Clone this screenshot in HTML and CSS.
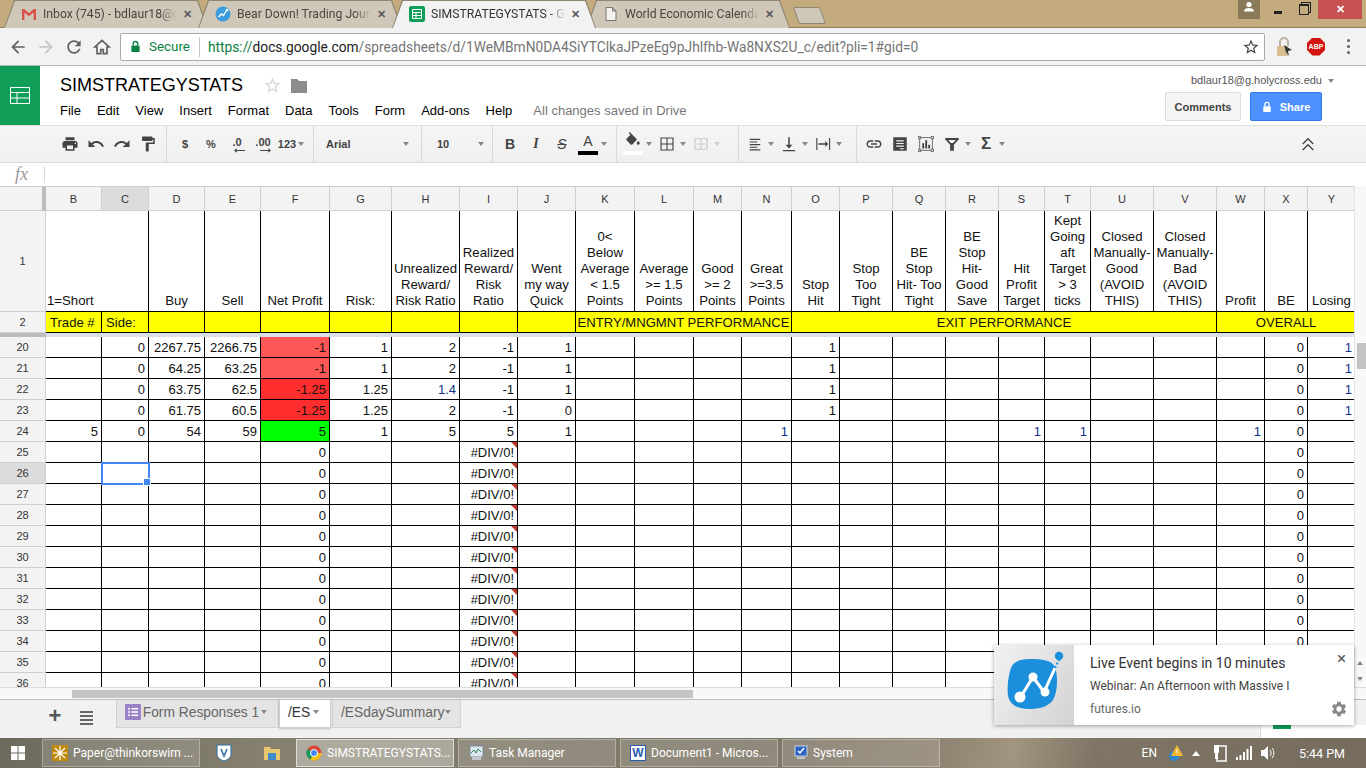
FILE: index.html
```html
<!DOCTYPE html>
<html lang="en">
<head>
  <meta charset="UTF-8">
  <title>SIMSTRATEGYSTATS - Google Sheets</title>
  <link rel="stylesheet" href="styles.css">
</head>
<body>

  <div class="tabstrip">
    <div class="tab">
      <svg class="tab-icon" viewBox="0 0 16 16"><path d="M1 3h2.2L8 7l4.8-4H15v11h-2.4V6.6L8 10.200 3.400 6.600V14H1z" fill="#d9534a"/></svg>
      <span class="tab-title">Inbox (745) - bdlaur18@g</span>
      <span class="tab-close">&#10005;</span>
    </div>
    <div class="tab">
      <svg class="tab-icon" viewBox="0 0 16 16"><circle cx="8" cy="8" r="7.500" fill="#3b9bdc"/><path d="M3.500 11l3-3 2 1.500 3-5" fill="none" stroke="#fff" stroke-width="1.400"/><circle cx="12" cy="4" r="1.300" fill="#fff"/></svg>
      <span class="tab-title">Bear Down! Trading Journ</span>
      <span class="tab-close">&#10005;</span>
    </div>
    <div class="tab active">
      <svg class="tab-icon" viewBox="0 0 16 16"><rect width="16" height="16" rx="2" fill="#0f9d58"/><path d="M3.500 3.500h9v9h-9zM3.500 6.500h9M3.500 9.500h9M7 6.500v6" fill="none" stroke="#fff"/></svg>
      <span class="tab-title">SIMSTRATEGYSTATS - Go</span>
      <span class="tab-close">&#10005;</span>
    </div>
    <div class="tab">
      <svg class="tab-icon" viewBox="0 0 16 16"><path d="M3 1.500h6.500l3.500 3.500v9.500H3zM9.500 1.500V5H13" fill="#f4f2ee" stroke="#777"/></svg>
      <span class="tab-title">World Economic Calenda</span>
      <span class="tab-close">&#10005;</span>
    </div>
    <div class="newtab"></div>
    <div class="win-controls">
      <div class="win-user"><svg viewBox="0 0 14 14" width="14" height="14"><circle cx="7" cy="4.500" r="2.600" fill="#fff"/><path d="M2 11.500c0-2.500 2.500-3.500 5-3.500s5 1 5 3.500z" fill="#fff"/></svg></div>
      <div class="win-min"></div>
      <div class="win-max"></div>
      <div class="win-close">&#10005;</div>
    </div>
  </div>

  <div class="chrome-bar">
    <svg class="nav-icon" viewBox="0 0 24 24"><path d="M20 11H7.830l5.590-5.590L12 4l-8 8 8 8 1.410-1.410L7.830 13H20v-2z" fill="#5f5f5f"/></svg>
    <svg class="nav-icon" viewBox="0 0 24 24"><path d="M12 4l-1.410 1.410L16.170 11H4v2h12.170l-5.580 5.590L12 20l8-8z" fill="#c4c4c4"/></svg>
    <svg class="nav-icon" viewBox="0 0 24 24"><path d="M17.650 6.350C16.200 4.900 14.210 4 12 4c-4.420 0-7.990 3.580-7.990 8s3.570 8 7.990 8c3.730 0 6.840-2.550 7.730-6h-2.080c-.82 2.330-3.040 4-5.650 4-3.310 0-6-2.690-6-6s2.690-6 6-6c1.660 0 3.140.69 4.220 1.780L13 11h7V4l-2.350 2.350z" fill="#5f5f5f"/></svg>
    <svg class="nav-icon" viewBox="0 0 24 24"><path d="M12 4L3.500 12H6v8h4.500v-5h3v5H18v-8h2.500z" fill="none" stroke="#5f5f5f" stroke-width="2"/></svg>
    <div class="omnibox">
      <svg class="secure-lock" viewBox="0 0 12 14"><path d="M3.500 6V4a2.500 2.500 0 0 1 5 0v2" fill="none" stroke="#0b8043" stroke-width="1.500"/><rect x="1.500" y="6" width="9" height="7" rx="1" fill="#0b8043"/></svg>
      <span class="secure">Secure</span>
      <span class="omni-sep"></span>
      <span class="url"><span class="url-https">https://</span><span class="url-host">docs.google.com</span>/spreadsheets/d/1WeMBmN0DA4SiYTClkaJPzeEg9pJhlfhb-Wa8NXS2U_c/edit?pli=1#gid=0</span>
      <svg class="omni-star" viewBox="0 0 24 24"><path d="M22 9.240l-7.190-.62L12 2 9.190 8.630 2 9.240l5.460 4.730L5.820 21 12 17.270 18.180 21l-1.630-7.030L22 9.240zM12 15.400l-3.760 2.270 1-4.280-3.320-2.880 4.380-.38L12 6.100l1.710 4.040 4.380.38-3.320 2.880 1 4.280L12 15.400z" fill="#444"/></svg>
    </div>
    <svg class="ext-lock" viewBox="0 0 18 22"><path d="M5 10V6a4 4 0 0 1 8 0v4" fill="none" stroke="#b9b2a5" stroke-width="2"/><rect x="2" y="10" width="11" height="10" rx="1" fill="#d8bf90"/><path d="M9 9l8 5-4 1 1 5-3-4z" fill="#333"/></svg>
    <div class="abp">ABP</div>
    <div class="kebab"><i></i><i></i><i></i></div>
  </div>

  <div class="doc-header">
    <div class="sheets-logo">
      <svg viewBox="0 0 20 17" width="20" height="17"><path d="M.5.5h19v16H.5zM.5 5.500h19M.5 11h19M7 5.500v11" fill="none" stroke="#fff"/></svg>
    </div>
    <div class="doc-main">
      <div class="doc-title-row">
        <span class="doc-title">SIMSTRATEGYSTATS</span>
        <svg class="doc-star" viewBox="0 0 24 24"><path d="M22 9.240l-7.190-.62L12 2 9.190 8.630 2 9.240l5.460 4.730L5.820 21 12 17.270 18.180 21l-1.630-7.030L22 9.240zM12 15.400l-3.760 2.270 1-4.280-3.320-2.880 4.380-.38L12 6.100l1.710 4.040 4.380.38-3.320 2.880 1 4.280L12 15.400z" fill="#d6d6d6"/></svg>
        <svg class="doc-folder" viewBox="0 0 16 14"><path d="M0 0h6l2 2h8v12H0z" fill="#8c8c8c"/></svg>
      </div>
      <div class="menu">
        <span>File</span><span>Edit</span><span>View</span><span>Insert</span><span>Format</span><span>Data</span><span>Tools</span><span>Form</span><span>Add-ons</span><span>Help</span>
        <span class="saved">All changes saved in Drive</span>
      </div>
    </div>
    <div class="doc-right">
      <div class="account">bdlaur18@g.holycross.edu<i class="caret account-caret"></i></div>
      <div class="doc-buttons">
        <div class="btn-comments">Comments</div>
        <div class="btn-share">
          <svg viewBox="0 0 12 14" width="10" height="12"><path d="M3.500 6V4a2.500 2.500 0 0 1 5 0v2" fill="none" stroke="#fff" stroke-width="1.500"/><rect x="1.500" y="6" width="9" height="7" rx="1" fill="#fff"/></svg>
          Share
        </div>
      </div>
    </div>
  </div>

  <div class="toolbar">
    <div class="tb-group g-edit">
      <div class="tb"><svg viewBox="0 0 24 24"><path d="M19 8H5c-1.660 0-3 1.340-3 3v6h4v4h12v-4h4v-6c0-1.660-1.340-3-3-3zm-3 11H8v-5h8v5zm3-7c-.55 0-1-.45-1-1s.45-1 1-1 1 .45 1 1-.45 1-1 1zm-1-9H6v4h12V3z"/></svg></div>
      <div class="tb"><svg viewBox="0 0 24 24"><path d="M12.500 8c-2.650 0-5.050.99-6.900 2.600L2 7v9h9l-3.620-3.620c1.390-1.160 3.160-1.880 5.120-1.880 3.540 0 6.550 2.310 7.600 5.500l2.370-.78C21.080 11.030 17.150 8 12.500 8z"/></svg></div>
      <div class="tb"><svg viewBox="0 0 24 24"><path d="M18.400 10.600C16.550 8.990 14.150 8 11.500 8c-4.650 0-8.580 3.030-9.960 7.220L3.900 16c1.050-3.190 4.050-5.500 7.600-5.500 1.950 0 3.730.72 5.120 1.880L13 16h9V7l-3.600 3.600z"/></svg></div>
      <div class="tb"><svg viewBox="0 0 24 24"><path d="M18 4V3c0-.55-.45-1-1-1H5c-.55 0-1 .45-1 1v4c0 .55.45 1 1 1h12c.55 0 1-.45 1-1V6h1v4H9v11c0 .55.45 1 1 1h2c.55 0 1-.45 1-1v-9h8V4h-3z"/></svg></div>
    </div>
    <div class="tb-group g-number">
      <div class="tb tb-text">$</div>
      <div class="tb tb-text">%</div>
      <div class="tb tb-text tb-dec">.0<svg viewBox="0 0 12 5" class="dec-arrow"><path d="M0 2.500L3 0v2h9v1H3v2z"/></svg></div>
      <div class="tb tb-text tb-dec">.00<svg viewBox="0 0 12 5" class="dec-arrow"><path d="M12 2.500L9 0v2H0v1h9v2z"/></svg></div>
      <div class="tb tb-text tb-fmt">123</div><i class="caret"></i>
    </div>
    <div class="tb-group g-font"><span>Arial</span><i class="caret"></i></div>
    <div class="tb-group g-size"><span>10</span><i class="caret"></i></div>
    <div class="tb-group g-style">
      <div class="tb tb-b">B</div>
      <div class="tb tb-i">I</div>
      <div class="tb tb-s">S</div>
      <div class="tb tb-a">A<span class="color-bar black"></span></div><i class="caret"></i>
    </div>
    <div class="tb-group g-cell">
      <div class="tb tb-fill"><svg viewBox="0 0 24 24"><path d="M16.560 8.940L7.620 0 6.210 1.410l2.380 2.380-5.150 5.150c-.59.59-.59 1.540 0 2.120l5.500 5.500c.29.29.68.44 1.060.44s.77-.15 1.060-.44l5.500-5.500c.59-.58.59-1.530 0-2.120zM19 11.500s-2 2.170-2 3.500c0 1.100.9 2 2 2s2-.9 2-2c0-1.330-2-3.500-2-3.500z"/></svg><span class="color-bar white"></span></div><i class="caret"></i>
      <div class="tb"><svg viewBox="0 0 24 24"><path d="M4 4h16v16H4zM4 12h16M12 4v16" fill="none" stroke="#444" stroke-width="1.500"/></svg></div><i class="caret"></i>
      <div class="tb"><svg viewBox="0 0 24 24"><path d="M4 5h16v14H4zM12 5v14M6 12h4M14 12h4" fill="none" stroke="#c8c8c8" stroke-width="1.500"/></svg></div><i class="caret faint"></i>
    </div>
    <div class="tb-group g-align">
      <div class="tb"><svg viewBox="0 0 24 24"><path d="M5 5h14v1.500H5zM5 8.500h10V10H5zM5 12h14v1.500H5zM5 15.500h10V17H5zM5 19h14v1.500H5z"/></svg></div><i class="caret"></i>
      <div class="tb"><svg viewBox="0 0 24 24"><path d="M4 20h16v1.500H4zM11 3h2v10h3.500L12 18l-4.500-5H11z"/></svg></div><i class="caret"></i>
      <div class="tb"><svg viewBox="0 0 24 24"><path d="M3 4h1.500v16H3zM20 4h1.500v16H20zM6 11h9V8l4 4-4 4v-3H6z"/></svg></div><i class="caret"></i>
    </div>
    <div class="tb-group g-insert">
      <div class="tb"><svg viewBox="0 0 24 24"><path d="M3.900 12c0-1.710 1.390-3.100 3.100-3.100h4V7H7c-2.760 0-5 2.240-5 5s2.240 5 5 5h4v-1.900H7c-1.710 0-3.100-1.390-3.100-3.100zM8 13h8v-2H8v2zm9-6h-4v1.900h4c1.710 0 3.100 1.390 3.100 3.100s-1.390 3.100-3.100 3.100h-4V17h4c2.760 0 5-2.240 5-5s-2.240-5-5-5z"/></svg></div>
      <div class="tb"><svg viewBox="0 0 24 24"><path d="M3 3h18v18H3z"/><path d="M7 7h10v1.500H7zM7 10.500h10V12H7zM7 14h10v1.500H7zM12 17.500h5V19h-5z" fill="#f1f1f1"/></svg></div>
      <div class="tb"><svg viewBox="0 0 24 24"><path d="M3.500 3.500h17v17h-17z" fill="none" stroke="#444"/><path d="M7 11h2.500v7H7zM11 7h2.500v11H11zM15 13h2.500v5H15z"/><path d="M2 2h3v3H2zM19 2h3v3h-3zM2 19h3v3H2zM19 19h3v3h-3z" fill="#f1f1f1" stroke="#444"/></svg></div>
      <div class="tb"><svg viewBox="0 0 24 24"><path d="M3 4h18v2l-6.500 7v8h-5v-8L3 6zM7 6.500l3.500 4h3l3.500-4z" fill-rule="evenodd"/></svg></div><i class="caret"></i>
      <div class="tb tb-sigma">&Sigma;</div><i class="caret"></i>
    </div>
    <div class="tb tb-collapse"><svg viewBox="0 0 24 24"><path d="M5 12l7-7 7 7M5 20l7-7 7 7" fill="none" stroke="#444" stroke-width="1.800"/></svg></div>
  </div>

  <div class="formula-bar">
    <div class="fx">fx</div>
    <div class="formula-input"></div>
  </div>

  <div class="grid-wrap">
    <div class="grid">
      <table class="sheet">
        <colgroup>
          <col class="c46"><col class="c56"><col class="c47"><col class="c56"><col class="c56"><col class="c69"><col class="c62"><col class="c68"><col class="c58"><col class="c58"><col class="c59"><col class="c59"><col class="c48"><col class="c50"><col class="c48"><col class="c53"><col class="c53"><col class="c53"><col class="c46"><col class="c46"><col class="c63"><col class="c63"><col class="c48"><col class="c43"><col class="c48">
        </colgroup>
        <tr class="col-head">
          <th class="corner"></th><th>B</th><th class="on">C</th><th>D</th><th>E</th><th>F</th><th>G</th><th>H</th><th>I</th><th>J</th><th>K</th><th>L</th><th>M</th><th>N</th><th>O</th><th>P</th><th>Q</th><th>R</th><th>S</th><th>T</th><th>U</th><th>V</th><th>W</th><th>X</th><th>Y</th>
        </tr>
        <tr class="r1">
          <th>1</th><td colspan="2" class="left">1=Short</td><td>Buy</td><td>Sell</td><td>Net Profit</td><td>Risk:</td><td>Unrealized<br>Reward/<br>Risk Ratio</td><td>Realized<br>Reward/<br>Risk<br>Ratio</td><td>Went<br>my way<br>Quick</td><td>0&lt;<br>Below<br>Average<br>&lt; 1.5<br>Points</td><td>Average<br>&gt;= 1.5<br>Points</td><td>Good<br>&gt;= 2<br>Points</td><td>Great<br>&gt;=3.5<br>Points</td><td>Stop<br>Hit</td><td>Stop<br>Too<br>Tight</td><td>BE<br>Stop<br>Hit- Too<br>Tight</td><td>BE<br>Stop<br>Hit-<br>Good<br>Save</td><td>Hit<br>Profit<br>Target</td><td>Kept<br>Going<br>aft<br>Target<br>&gt; 3<br>ticks</td><td>Closed<br>Manually-<br>Good<br>(AVOID<br>THIS)</td><td>Closed<br>Manually-<br>Bad<br>(AVOID<br>THIS)</td><td>Profit</td><td>BE</td><td>Losing</td>
        </tr>
        <tr class="r2">
          <th>2</th><td class="left">Trade #</td><td class="left">Side:</td><td></td><td></td><td></td><td></td><td></td><td></td><td></td><td colspan="4">ENTRY/MNGMNT PERFORMANCE</td><td colspan="8">EXIT PERFORMANCE</td><td colspan="3">OVERALL</td>
        </tr>
        <tr class="freeze"><th></th><td colspan="24"></td></tr>
        <tr><th>20</th><td></td><td>0</td><td>2267.75</td><td>2266.75</td><td class="loss">-1</td><td>1</td><td>2</td><td>-1</td><td>1</td><td></td><td></td><td></td><td></td><td>1</td><td></td><td></td><td></td><td></td><td></td><td></td><td></td><td></td><td>0</td><td class="blue">1</td></tr>
        <tr><th>21</th><td></td><td>0</td><td>64.25</td><td>63.25</td><td class="loss">-1</td><td>1</td><td>2</td><td>-1</td><td>1</td><td></td><td></td><td></td><td></td><td>1</td><td></td><td></td><td></td><td></td><td></td><td></td><td></td><td></td><td>0</td><td class="blue">1</td></tr>
        <tr><th>22</th><td></td><td>0</td><td>63.75</td><td>62.5</td><td class="big-loss">-1.25</td><td>1.25</td><td class="blue">1.4</td><td>-1</td><td>1</td><td></td><td></td><td></td><td></td><td>1</td><td></td><td></td><td></td><td></td><td></td><td></td><td></td><td></td><td>0</td><td class="blue">1</td></tr>
        <tr><th>23</th><td></td><td>0</td><td>61.75</td><td>60.5</td><td class="big-loss">-1.25</td><td>1.25</td><td>2</td><td>-1</td><td>0</td><td></td><td></td><td></td><td></td><td>1</td><td></td><td></td><td></td><td></td><td></td><td></td><td></td><td></td><td>0</td><td class="blue">1</td></tr>
        <tr><th>24</th><td>5</td><td>0</td><td>54</td><td>59</td><td class="win">5</td><td>1</td><td>5</td><td>5</td><td>1</td><td></td><td></td><td></td><td class="blue">1</td><td></td><td></td><td></td><td></td><td class="blue">1</td><td class="blue">1</td><td></td><td></td><td class="blue">1</td><td>0</td><td></td></tr>
        <tr><th>25</th><td></td><td></td><td></td><td></td><td>0</td><td></td><td></td><td class="err">#DIV/0!</td><td></td><td></td><td></td><td></td><td></td><td></td><td></td><td></td><td></td><td></td><td></td><td></td><td></td><td></td><td>0</td><td></td></tr>
        <tr><th class="on">26</th><td></td><td class="sel"></td><td></td><td></td><td>0</td><td></td><td></td><td class="err">#DIV/0!</td><td></td><td></td><td></td><td></td><td></td><td></td><td></td><td></td><td></td><td></td><td></td><td></td><td></td><td></td><td>0</td><td></td></tr>
        <tr><th>27</th><td></td><td></td><td></td><td></td><td>0</td><td></td><td></td><td class="err">#DIV/0!</td><td></td><td></td><td></td><td></td><td></td><td></td><td></td><td></td><td></td><td></td><td></td><td></td><td></td><td></td><td>0</td><td></td></tr>
        <tr><th>28</th><td></td><td></td><td></td><td></td><td>0</td><td></td><td></td><td class="err">#DIV/0!</td><td></td><td></td><td></td><td></td><td></td><td></td><td></td><td></td><td></td><td></td><td></td><td></td><td></td><td></td><td>0</td><td></td></tr>
        <tr><th>29</th><td></td><td></td><td></td><td></td><td>0</td><td></td><td></td><td class="err">#DIV/0!</td><td></td><td></td><td></td><td></td><td></td><td></td><td></td><td></td><td></td><td></td><td></td><td></td><td></td><td></td><td>0</td><td></td></tr>
        <tr><th>30</th><td></td><td></td><td></td><td></td><td>0</td><td></td><td></td><td class="err">#DIV/0!</td><td></td><td></td><td></td><td></td><td></td><td></td><td></td><td></td><td></td><td></td><td></td><td></td><td></td><td></td><td>0</td><td></td></tr>
        <tr><th>31</th><td></td><td></td><td></td><td></td><td>0</td><td></td><td></td><td class="err">#DIV/0!</td><td></td><td></td><td></td><td></td><td></td><td></td><td></td><td></td><td></td><td></td><td></td><td></td><td></td><td></td><td>0</td><td></td></tr>
        <tr><th>32</th><td></td><td></td><td></td><td></td><td>0</td><td></td><td></td><td class="err">#DIV/0!</td><td></td><td></td><td></td><td></td><td></td><td></td><td></td><td></td><td></td><td></td><td></td><td></td><td></td><td></td><td>0</td><td></td></tr>
        <tr><th>33</th><td></td><td></td><td></td><td></td><td>0</td><td></td><td></td><td class="err">#DIV/0!</td><td></td><td></td><td></td><td></td><td></td><td></td><td></td><td></td><td></td><td></td><td></td><td></td><td></td><td></td><td>0</td><td></td></tr>
        <tr><th>34</th><td></td><td></td><td></td><td></td><td>0</td><td></td><td></td><td class="err">#DIV/0!</td><td></td><td></td><td></td><td></td><td></td><td></td><td></td><td></td><td></td><td></td><td></td><td></td><td></td><td></td><td>0</td><td></td></tr>
        <tr><th>35</th><td></td><td></td><td></td><td></td><td>0</td><td></td><td></td><td class="err">#DIV/0!</td><td></td><td></td><td></td><td></td><td></td><td></td><td></td><td></td><td></td><td></td><td></td><td></td><td></td><td></td><td>0</td><td></td></tr>
        <tr><th>36</th><td></td><td></td><td></td><td></td><td>0</td><td></td><td></td><td class="err">#DIV/0!</td><td></td><td></td><td></td><td></td><td></td><td></td><td></td><td></td><td></td><td></td><td></td><td></td><td></td><td></td><td>0</td><td></td></tr>
      </table>
    </div>
    <div class="vscroll">
      <div class="vthumb"></div>
      <div class="varrows"><span class="arrow-up"></span><span class="arrow-down"></span></div>
    </div>
  </div>

  <div class="hscroll"><div class="hthumb"></div></div>

  <div class="sheetbar">
    <div class="sheet-add">+</div>
    <div class="sheet-list"><i></i><i></i><i></i><i></i></div>
    <div class="sheet-tab form-tab">
      <svg viewBox="0 0 16 16" width="16" height="16"><rect width="16" height="16" rx="1" fill="#9a84c9"/><path d="M3 4h2v1.500H3zM6.500 4H13v1.500H6.500zM3 7.300h2v1.500H3zM6.500 7.300H13v1.500H6.500zM3 10.600h2v1.500H3zM6.500 10.600H13v1.500H6.500z" fill="#fff"/></svg>
      <span>Form Responses 1</span><i class="caret"></i>
    </div>
    <div class="sheet-tab active"><span>/ES</span><i class="caret"></i></div>
    <div class="sheet-tab summary-tab"><span>/ESdaySummary</span><i class="caret"></i></div>
    <div class="explore"><span class="explore-bit"></span></div>
  </div>

  <div class="taskbar">
    <div class="start">
      <svg viewBox="0 0 14 14" width="14" height="14"><path d="M0 0h6.500v6.500H0zM7.500 0H14v6.500H7.500zM0 7.500h6.500V14H0zM7.500 7.500H14V14H7.500z" fill="#fff"/></svg>
    </div>
    <div class="task">
      <span class="task-ico tos"><svg viewBox="0 0 16 16"><path d="M8 1v14M1 8h14M3 3l10 10M13 3L3 13" stroke="#fff" stroke-width="1.200"/></svg></span>
      <span class="task-label">Paper@thinkorswim ...</span>
    </div>
    <div class="pinned first">
      <svg viewBox="0 0 16 18" width="16" height="18"><path d="M1 1h14v9c0 4-4 6-7 7-3-1-7-3-7-7z" fill="#fff" stroke="#2a6ea8"/><path d="M5 5l3 7 3-7" fill="none" stroke="#2a6ea8" stroke-width="1.500"/></svg>
    </div>
    <div class="pinned">
      <svg viewBox="0 0 18 16" width="18" height="16"><path d="M1 2h6l1 2h9v11H1z" fill="#e8c76a"/><rect x="5" y="8" width="8" height="7" fill="#3d8cc9"/></svg>
    </div>
    <div class="task current">
      <svg class="task-ico" viewBox="0 0 16 16"><circle cx="8" cy="8" r="7.500" fill="#db4437"/><path d="M8 8L15.500 8A7.500 7.500 0 0 1 4 14.400z" fill="#f4c20d"/><path d="M8 8L4.300 14.500A7.500 7.500 0 0 1 1.500 4z" fill="#0f9d58"/><circle cx="8" cy="8" r="3.500" fill="#4285f4" stroke="#fff"/></svg>
      <span class="task-label">SIMSTRATEGYSTATS...</span>
    </div>
    <div class="task">
      <svg class="task-ico" viewBox="0 0 16 16"><rect x="2" y="1" width="13" height="11" fill="#dfe8f0" stroke="#7d8b99"/><path d="M3 8l3-3 2 3 2-4 3 3" fill="none" stroke="#2d8a5b"/><path d="M4 12h9v3H4z" fill="#c4c8cc"/></svg>
      <span class="task-label">Task Manager</span>
    </div>
    <div class="task">
      <span class="task-ico word">W</span>
      <span class="task-label">Document1 - Micros...</span>
    </div>
    <div class="task">
      <svg class="task-ico" viewBox="0 0 16 16"><rect x="3" y="1" width="12" height="10" fill="#2b62c6" stroke="#c9d3e0"/><path d="M6 6l2 2 4-5" fill="none" stroke="#fff" stroke-width="1.500"/><path d="M5 12h8v2H5z" fill="#c4c8cc"/></svg>
      <span class="task-label">System</span>
    </div>
    <div class="tray">
      <span class="tray-lang">EN</span>
      <svg viewBox="0 0 16 18" width="16" height="18"><circle cx="6" cy="12" r="5" fill="#2f86d3"/><path d="M9 1l6 11H3z" fill="#f3b830"/><path d="M8.500 5h1v4h-1z" fill="#fff"/></svg>
      <span class="tray-up"></span>
      <svg viewBox="0 0 14 18" width="14" height="18"><rect x="3" y="2" width="9" height="15" fill="none" stroke="#fff" stroke-width="1.500"/><rect x="0" y="1" width="5" height="8" fill="#fff"/><path d="M1 9h3v6H1z" fill="#fff"/></svg>
      <svg viewBox="0 0 16 14" width="16" height="14"><path d="M0 11h2v3H0zM3.500 9h2v5h-2zM7 6h2v8H7zM10.500 3h2v11h-2zM14 0h2v14h-2z" fill="#fff"/></svg>
      <svg viewBox="0 0 16 16" width="16" height="16"><path d="M1 5h3l4-4v14l-4-4H1z" fill="#fff"/><path d="M10 5c1.500 1.500 1.500 4.500 0 6M12 3c2.500 2.500 2.500 7.500 0 10" fill="none" stroke="#fff"/></svg>
      <span class="tray-time">5:44 PM</span>
    </div>
  </div>

  <div class="toast">
    <div class="toast-img">
      <svg viewBox="0 0 80 80" width="80" height="80">
        <path d="M16 26c2-9 9-12 20-12 12 0 22 1 25 8 3 9 3 24-2 33-5 7-14 9-24 9-11 0-19-4-21-13-1-8 0-17 2-25z" fill="#1b8fdb"/>
        <path d="M26 53l13-21 11 15 11-24" fill="none" stroke="#fff" stroke-width="3"/>
        <path d="M61 23l6-12" stroke="#1b8fdb" stroke-width="2" stroke-dasharray="2 2"/>
        <circle cx="26" cy="52" r="5.500" fill="#fff"/>
        <circle cx="39" cy="32" r="4.500" fill="#fff"/>
        <circle cx="51" cy="47" r="4.500" fill="#fff"/>
        <circle cx="65" cy="11" r="4.200" fill="#1b8fdb"/>
      </svg>
    </div>
    <div class="toast-body">
      <div class="toast-title">Live Event begins in 10 minutes</div>
      <div class="toast-text">Webinar: An Afternoon with Massive I</div>
      <div class="toast-site">futures.io</div>
    </div>
    <div class="toast-close">&times;</div>
    <svg class="toast-gear" viewBox="0 0 24 24"><path d="M19.140 12.940c.04-.3.06-.61.06-.94 0-.32-.02-.64-.07-.94l2.030-1.580c.18-.14.23-.41.12-.61l-1.920-3.320c-.12-.22-.37-.29-.59-.22l-2.390.96c-.5-.38-1.030-.7-1.620-.94l-.36-2.540c-.04-.24-.24-.41-.48-.41h-3.840c-.24 0-.43.17-.47.41l-.36 2.540c-.59.24-1.130.57-1.620.94l-2.390-.96c-.22-.08-.47 0-.59.22L2.740 8.870c-.12.21-.08.47.12.61l2.030 1.580c-.05.3-.09.63-.09.94s.02.64.07.94l-2.030 1.580c-.18.14-.23.41-.12.61l1.920 3.320c.12.22.37.29.59.22l2.390-.96c.5.38 1.030.7 1.620.94l.36 2.540c.05.24.24.41.48.41h3.840c.24 0 .44-.17.47-.41l.36-2.540c.59-.24 1.130-.56 1.620-.94l2.390.96c.22.08.47 0 .59-.22l1.920-3.320c.12-.22.07-.47-.12-.61l-2.010-1.580zM12 15.600c-1.980 0-3.600-1.620-3.600-3.600s1.620-3.600 3.600-3.600 3.600 1.620 3.600 3.600-1.620 3.600-3.600 3.600z" fill="#8a8a8a"/></svg>
  </div>

</body>
</html>
```

FILE: styles.css
```css
* {
  box-sizing: border-box;
}

body {
  margin: 0;
  width: 1366px;
  height: 768px;
  overflow: hidden;
  display: flex;
  flex-direction: column;
  font-family: "Liberation Sans", Arial, sans-serif;
  color: #222;
  background: #fff;
  position: relative;
}

/* browser tabs */
.tabstrip {
  height: 28px;
  flex: none;
  display: flex;
  padding-left: 4px;
  background: #c3ab7d;
  border-bottom: 1px solid #8f8262;
}

.tab {
  position: relative;
  width: 204px;
  height: 28px;
  margin-right: -10px;
  padding: 0 15px 0 17px;
  display: flex;
  align-items: center;
  gap: 6px;
  font-family: Roboto, sans-serif;
  font-size: 12.2px;
  color: #4a4640;
}

.tab::before,
.tab::after {
  content: "";
  position: absolute;
  top: 0;
  bottom: 0;
  left: 0;
  right: 0;
  clip-path: polygon(0 100%, 10px 0, calc(100% - 10px) 0, 100% 100%);
  background: #8e8673;
}

.tab::after {
  left: 1px;
  right: 1px;
  top: 1px;
  background: #cfc8b9;
}

.tab > * {
  position: relative;
  z-index: 1;
}

.tab.active {
  z-index: 2;
  color: #333;
}

.tab.active::after {
  background: #f2f2f2;
}

.tab-icon {
  width: 16px;
  height: 16px;
  flex: none;
}

.tab-title {
  flex: 1;
  min-width: 0;
  white-space: nowrap;
  -webkit-mask-image: linear-gradient(to right, #000 88%, transparent);
  mask-image: linear-gradient(to right, #000 88%, transparent);
}

.tab-close {
  font-size: 11px;
  font-weight: bold;
  color: #5a5a5a;
  width: 10px;
}

.newtab {
  width: 27px;
  height: 17px;
  margin: 7px 0 0 16px;
  transform: skewX(20deg);
  background: #cfc8b9;
  border: 1px solid #8e8673;
  border-radius: 2px;
}

.win-controls {
  margin-left: auto;
  display: flex;
  align-items: flex-start;
  padding-right: 4px;
}

.win-user {
  width: 22px;
  height: 19px;
  background: #8b7a5a;
  display: flex;
  justify-content: center;
}

.win-min {
  width: 8px;
  height: 3px;
  background: #222;
  margin: 11px 17px 0 14px;
}

.win-max {
  width: 10px;
  height: 11px;
  margin: 4px 9px 0 0;
  border: 1px solid #222;
  border-top-width: 2px;
  box-shadow: 2px -2px 0 -1px #c3ab7d, 2px -2px 0 0 #222;
}

.win-close {
  width: 44px;
  height: 19px;
  background: #c75050;
  color: #fff;
  font-size: 11px;
  font-weight: bold;
  text-align: center;
  line-height: 19px;
}

/* url bar */
.chrome-bar {
  height: 38px;
  flex: none;
  display: flex;
  align-items: center;
  padding-left: 8px;
  background: #f2f2f2;
  border-bottom: 1px solid #b8b8b8;
}

.nav-icon {
  width: 20px;
  height: 20px;
  margin-right: 8px;
  flex: none;
}

.omnibox {
  width: 1145px;
  height: 28px;
  padding: 0 4px 0 9px;
  display: flex;
  align-items: center;
  background: #fff;
  border: 1px solid #a9a9a9;
  border-radius: 2px;
  font-family: Roboto, sans-serif;
  font-size: 13.75px;
  color: #757575;
}

.secure-lock {
  width: 11px;
  height: 13px;
  margin-right: 8px;
}

.secure {
  color: #0b8043;
  font-size: 13.4px;
}

.omni-sep {
  width: 1px;
  height: 20px;
  background: #c8c8c8;
  margin: 0 8px 0 9px;
}

.url {
  flex: 1;
  white-space: nowrap;
}

.url-https {
  color: #0b8043;
}

.url-host {
  color: #222;
}

.omni-star {
  width: 18px;
  height: 18px;
}

.ext-lock {
  width: 18px;
  height: 22px;
  margin-left: 10px;
}

.abp {
  width: 18px;
  height: 18px;
  margin-left: 14px;
  clip-path: polygon(30% 0, 70% 0, 100% 30%, 100% 70%, 70% 100%, 30% 100%, 0 70%, 0 30%);
  background: #d3150f;
  color: #fff;
  font-size: 7px;
  font-weight: bold;
  line-height: 18px;
  text-align: center;
}

.kebab {
  margin-left: 22px;
  display: flex;
  flex-direction: column;
  gap: 3px;
}

.kebab i {
  width: 3px;
  height: 3px;
  background: #5f5f5f;
  border-radius: 50%;
}

/* document header */
.doc-header {
  height: 60px;
  flex: none;
  display: flex;
  background: #fff;
  border-bottom: 1px solid #e0e0e0;
}

.sheets-logo {
  width: 40px;
  background: #0f9d58;
  display: flex;
  align-items: center;
  justify-content: center;
}

.doc-main {
  padding-left: 20px;
}

.doc-title-row {
  height: 34px;
  display: flex;
  align-items: flex-end;
}

.doc-title {
  font-size: 18px;
  color: #000;
  line-height: 29px;
}

.doc-star {
  width: 19px;
  height: 19px;
  margin: 0 0 5px 20px;
}

.doc-folder {
  width: 16px;
  height: 14px;
  margin: 0 0 7px 9px;
}

.menu {
  display: flex;
  gap: 16px;
  margin-top: 3px;
  font-size: 13px;
  line-height: 16px;
  color: #000;
}

.saved {
  color: #777;
  margin-left: 5px;
}

.doc-right {
  margin-left: auto;
  width: 200px;
  padding: 7px 0 0 0;
  display: flex;
  flex-direction: column;
  align-items: flex-end;
}

.account {
  font-size: 11px;
  color: #555;
  line-height: 15px;
  padding-right: 44px;
  position: relative;
}

.account-caret {
  position: absolute;
  right: 30px;
  top: 6px;
  border-top-color: #666;
}

.doc-buttons {
  display: flex;
  gap: 9px;
  margin-top: 4px;
  padding-right: 44px;
}

.btn-comments,
.btn-share {
  height: 29px;
  font-size: 11px;
  font-weight: bold;
  border-radius: 2px;
  display: flex;
  align-items: center;
  justify-content: center;
}

.btn-comments {
  width: 76px;
  color: #444;
  background: #f5f5f5;
  border: 1px solid #dcdcdc;
}

.btn-share {
  width: 72px;
  gap: 8px;
  color: #fff;
  background: #4d90fe;
  border: 1px solid #3079ed;
}

/* sheets toolbar */
.toolbar {
  height: 37px;
  flex: none;
  display: flex;
  align-items: stretch;
  background: linear-gradient(#f5f5f5, #f0f0f0);
  border-bottom: 1px solid #dadada;
}

.tb-group {
  display: flex;
  align-items: center;
  border-right: 1px solid #dadada;
  flex: none;
  height: 36px;
}

.g-edit { width: 167px; padding-left: 57px; }
.g-number { width: 147px; padding-left: 5px; }
.g-font { width: 108px; padding: 0 12px; justify-content: space-between; font-size: 11px; font-weight: bold; color: #444; }
.g-size { width: 71px; padding: 0 8px 0 15px; justify-content: space-between; font-size: 11px; font-weight: bold; color: #444; }
.g-style { width: 124px; padding-left: 4px; }
.g-cell { width: 122px; padding-left: 3px; }
.g-align { width: 118px; padding-left: 3px; }
.g-insert { width: auto; padding-left: 4px; border-right: 0; }

.tb {
  position: relative;
  width: 26px;
  height: 36px;
  flex: none;
  display: flex;
  align-items: center;
  justify-content: center;
  color: #444;
}

.tb svg {
  width: 18px;
  height: 18px;
  fill: #444;
}

.tb-text {
  font-size: 11px;
  font-weight: bold;
}

.tb-dec {
  flex-direction: column;
  padding-top: 2px;
  line-height: 11px;
}

.tb .dec-arrow {
  width: 11px;
  height: 5px;
  margin-left: 5px;
}

.tb-fmt {
  width: 22px;
}

.tb-b,
.tb-i,
.tb-s,
.tb-a {
  font-size: 14px;
}

.tb-b {
  font-weight: bold;
}

.tb-i {
  font-style: italic;
  font-family: "Liberation Serif", serif;
  font-weight: bold;
}

.tb-s {
  text-decoration: line-through;
  font-style: italic;
}

.tb-a {
  padding-bottom: 6px;
}

.color-bar {
  position: absolute;
  left: 3px;
  right: 3px;
  top: 25px;
  height: 4px;
}

.color-bar.black {
  background: #000;
}

.color-bar.white {
  background: #fff;
}

.tb-fill svg {
  margin-bottom: 6px;
}

.tb-sigma {
  font-size: 17px;
  font-weight: bold;
}

.tb-collapse {
  margin-left: auto;
  margin-right: 45px;
}

.caret {
  display: block;
  width: 0;
  height: 0;
  flex: none;
  margin: 0 2px 0 0;
  border: 3.500px solid transparent;
  border-top: 4px solid #888;
  border-bottom: 0;
}

.caret.faint {
  border-top-color: #ccc;
}

.g-font .caret,
.g-size .caret {
  margin: 0;
}

/* formula bar */
.formula-bar {
  height: 23px;
  flex: none;
  display: flex;
  background: #fff;
}

.fx {
  width: 46px;
  padding: 0 0 0 15px;
  font-family: "Liberation Serif", serif;
  font-style: italic;
  font-size: 18px;
  line-height: 22px;
  color: #999;
  position: relative;
}

.fx::after {
  content: "";
  position: absolute;
  right: 1px;
  top: 3px;
  bottom: 3px;
  width: 1px;
  background: #d8d8d8;
}

/* grid */
.grid-wrap {
  height: 501px;
  flex: none;
  display: flex;
}

.grid {
  width: 1354px;
  height: 501px;
  overflow: hidden;
}

.sheet {
  width: 1356px;
  table-layout: fixed;
  border-collapse: separate;
  border-spacing: 0;
  font-size: 13px;
  color: #111;
}

.c43 { width: 43px; }
.c46 { width: 46px; }
.c47 { width: 47px; }
.c48 { width: 48px; }
.c50 { width: 50px; }
.c53 { width: 53px; }
.c56 { width: 56px; }
.c58 { width: 58px; }
.c59 { width: 59px; }
.c62 { width: 62px; }
.c63 { width: 63px; }
.c68 { width: 68px; }
.c69 { width: 69px; }

.sheet th {
  background: #f3f3f3;
  border-right: 1px solid #cfcfcf;
  border-bottom: 1px solid #cfcfcf;
  font-weight: normal;
  font-size: 11px;
  color: #333;
  padding: 0;
  text-align: center;
  height: 21px;
}

.sheet th.on {
  background: #dcdcdc;
}

.sheet td {
  height: 21px;
  padding: 0 3px 0 2px;
  border-right: 1px solid #000;
  border-bottom: 1px solid #000;
  text-align: right;
  white-space: nowrap;
  overflow: visible;
  position: relative;
}

.col-head th {
  height: 25px;
  border-top: 1px solid #cfcfcf;
}

.col-head .corner {
  border-right: 4px solid #bcbcbc;
}

.r1 td {
  height: 101px;
  vertical-align: bottom;
  text-align: center;
  font-size: 13.2px;
  line-height: 16px;
  padding: 0 1px 2px 1px;
}

.r1 td.left {
  text-align: left;
}

.r2 td {
  background: #ff0;
  text-align: center;
  font-size: 13.1px;
  padding: 0 1px;
}

.r2 td.left {
  text-align: left;
  padding-left: 4px;
}

.sheet .freeze th,
.sheet .freeze td {
  height: 4px;
  padding: 0;
  border: 0;
  font-size: 0;
  line-height: 0;
}

.sheet .freeze th {
  background: #bcbcbc;
}

.sheet .freeze td {
  background: #dadfe8;
}

.sheet td.loss { background: #ff5656; }
.sheet td.big-loss { background: #ff2e2e; }
.sheet td.win { background: #0f0; }
.sheet td.blue { color: #10308c; }

.err::after {
  content: "";
  position: absolute;
  top: 0;
  right: 0;
  border-top: 6px solid #c0392b;
  border-left: 6px solid transparent;
}

.sel {
  outline: 2px solid #4285f4;
  outline-offset: -1px;
  z-index: 1;
}

.sel::after {
  content: "";
  position: absolute;
  right: -3px;
  bottom: -3px;
  width: 6px;
  height: 6px;
  background: #4285f4;
  border: 1px solid #fff;
}

.vscroll {
  width: 12px;
  position: relative;
  background: #f8f8f8;
  border-left: 1px solid #e4e4e4;
}

.vthumb {
  position: absolute;
  top: 157px;
  left: 2px;
  right: 0;
  height: 26px;
  background: #c4c4c4;
}

.varrows {
  position: absolute;
  bottom: 6px;
  left: 2px;
  display: flex;
  flex-direction: column;
  gap: 12px;
}

.arrow-up {
  border: 3px solid transparent;
  border-bottom: 4px solid #888;
  border-top: 0;
}

.arrow-down {
  border: 3px solid transparent;
  border-top: 4px solid #888;
  border-bottom: 0;
}

.hscroll {
  height: 13px;
  flex: none;
  padding: 2px 673px 1px 72px;
  background: #f8f8f8;
  border-top: 1px solid #dcdcdc;
  border-bottom: 1px solid #bcbcbc;
}

.hthumb {
  height: 100%;
  background: #c4c4c4;
}

/* sheet tabs */
.sheetbar {
  height: 38px;
  flex: none;
  display: flex;
  align-items: flex-start;
  background: #f1f1f1;
  position: relative;
}

.sheet-add {
  width: 16px;
  margin: 4px 0 0 47px;
  font-size: 22px;
  font-weight: bold;
  line-height: 24px;
  color: #555;
  text-align: center;
}

.sheet-list {
  width: 13px;
  margin: 11px 23px 0 17px;
  display: flex;
  flex-direction: column;
  gap: 2px;
}

.sheet-list i {
  height: 2px;
  background: #666;
}

.sheet-tab {
  height: 28px;
  padding: 0 9px 3px 8px;
  display: flex;
  align-items: center;
  justify-content: space-between;
  font-size: 13.8px;
  color: #666;
  background: #e4e4e4;
  border: 1px solid #d2d2d2;
  border-top: 0;
  white-space: nowrap;
}

.form-tab {
  width: 163px;
}

.summary-tab {
  width: 129px;
  margin-left: 1px;
}

.sheet-tab.active {
  width: 52px;
  background: #fff;
  color: #333;
  border-color: #cfcfcf;
  box-shadow: 0 1px 2px rgba(0, 0, 0, 0.2);
}

.explore {
  position: absolute;
  left: 1260px;
  top: 25px;
  width: 106px;
  height: 13px;
  background: #fff;
  border-left: 1px solid #dcdcdc;
}

.explore-bit {
  display: block;
  width: 18px;
  height: 4px;
  margin-left: 12px;
  background: #0f9d58;
}

/* windows taskbar */
.taskbar {
  height: 30px;
  flex: none;
  display: flex;
  align-items: center;
  font-family: Roboto, sans-serif;
  color: #fff;
  background: linear-gradient(100deg, #6d6a5d 0%, #85806f 20%, #7d7666 55%, #8c8170 68%, #a1957f 74%, #7f7565 80%, #766c5d 100%);
}

.start {
  width: 42px;
  display: flex;
  justify-content: center;
  padding-right: 6px;
}

.task {
  width: 158px;
  height: 28px;
  margin-right: 4px;
  padding: 0 5px 0 9px;
  display: flex;
  align-items: center;
  gap: 5px;
  font-size: 12px;
  background: rgba(255, 255, 255, 0.14);
  border: 1px solid rgba(255, 255, 255, 0.3);
  white-space: nowrap;
}

.task.current {
  background: rgba(255, 255, 255, 0.34);
  border-color: rgba(255, 255, 255, 0.6);
}

.task-ico {
  width: 16px;
  height: 16px;
  flex: none;
}

.task-ico.tos {
  background: #c08a0a;
  display: block;
}

.task-ico.word {
  background: #fff;
  border: 1px solid #2a5db0;
  color: #2a5db0;
  font: bold 12px/14px "Liberation Sans", sans-serif;
  text-align: center;
}

.pinned {
  width: 48px;
  display: flex;
  justify-content: center;
}

.pinned.first {
  margin-left: -4px;
}

.tray {
  margin-left: auto;
  padding-right: 21px;
  display: flex;
  align-items: center;
  gap: 8px;
  font-size: 12px;
}

.tray-lang {
  margin-right: 3px;
}

.tray-up {
  margin-right: 6px;
  border: 4px solid transparent;
  border-bottom: 5px solid #fff;
  border-top: 0;
}

.tray-time {
  margin-left: 15px;
  font-size: 12.5px;
}

/* notification */
.toast {
  position: absolute;
  left: 994px;
  top: 645px;
  width: 360px;
  height: 80px;
  display: flex;
  background: #fff;
  box-shadow: 0 1px 4px rgba(0, 0, 0, 0.35);
  font-family: Roboto, sans-serif;
}

.toast-img {
  width: 80px;
  height: 80px;
  background: linear-gradient(120deg, #f2f2f2, #d2d2d2);
}

.toast-body {
  padding: 10px 0 0 16px;
}

.toast-title {
  font-size: 14px;
  line-height: 17px;
  color: #333;
}

.toast-text {
  margin-top: 7px;
  font-size: 12px;
  line-height: 15px;
  color: #444;
}

.toast-site {
  margin-top: 8px;
  font-size: 12px;
  line-height: 15px;
  color: #666;
}

.toast-close {
  position: absolute;
  right: 8px;
  top: 5px;
  font-size: 17px;
  line-height: 17px;
  color: #555;
}

.toast-gear {
  position: absolute;
  right: 6px;
  bottom: 7px;
  width: 18px;
  height: 18px;
}
```
